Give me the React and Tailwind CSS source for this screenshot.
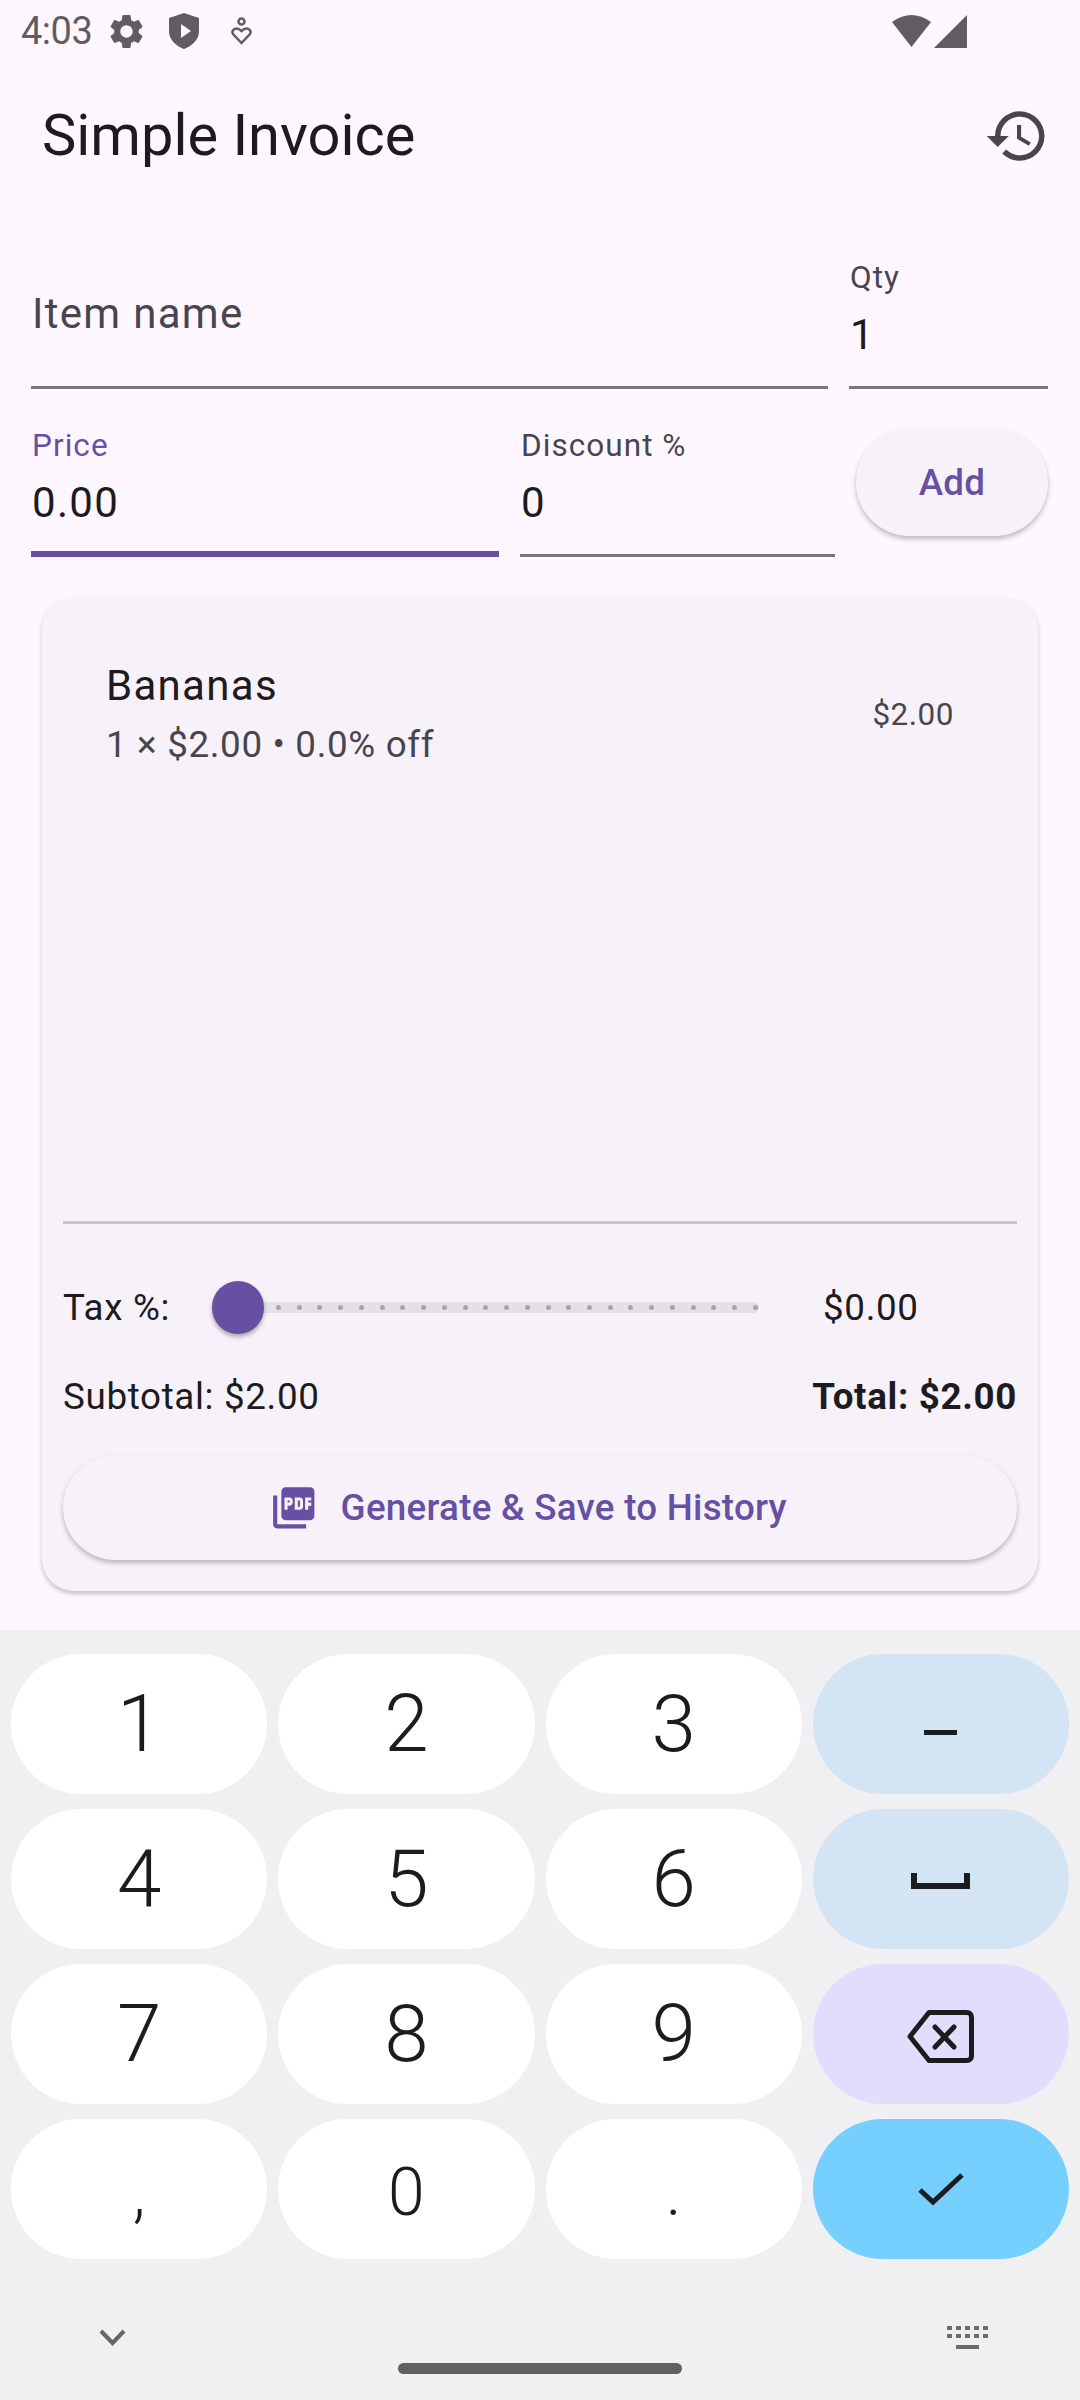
import { MdSettings, MdHistory, MdPictureAsPdf } from 'react-icons/md';

function Field({ label, value, focused, className }) {
    return (
        <div className={`h-[137px] pl-px pt-[2px] flex flex-col ${focused ? 'border-b-[6px] border-[#6750a4]' : 'border-b-[3px] border-[#79747e]'} ${className}`}>
            <div className={`text-[31.500px] leading-[48px] tracking-[1.05px] ${focused ? 'text-[#6750a4]' : 'text-[#49454f]'}`}>{label}</div>
            <div className="mt-[7px] text-[42px] leading-[52px] tracking-[1.3px] text-[#1d1b20]">{value}</div>
        </div>
    );
}

function Key({ children, className = 'bg-white' }) {
    return (
        <div className={`h-[140px] rounded-full flex items-center justify-center leading-none text-[#1b1c1e] ${className}`}>
            {children}
        </div>
    );
}

const digits = ['1', '2', '3', '4', '5', '6', '7', '8', '9'];
const dots = Array.from({ length: 24 }, (_, i) => i);

function DigitKey({ d }) {
    return <Key><span className="text-[80px] font-[350]">{d}</span></Key>;
}

function BottomKey({ d }) {
    return <Key><span className="mt-[8px] text-[66px] font-light">{d}</span></Key>;
}

export default function App() {
    return (
        <div className="w-[1080px] h-[2400px] flex flex-col bg-[#fef7ff] font-['Roboto',sans-serif] overflow-hidden">
            {/* status bar */}
            <div className="h-[57px] pt-[5px] flex items-center pl-[21px] pr-[113px] text-[#5f5d60]">
                <span className="text-[38px] leading-none tracking-[-0.5px] w-[85px]">4:03</span>
                <MdSettings className="w-[41px] h-[41px]" />
                <svg className="ml-[22px]" width="30" height="36" viewBox="0 0 30 36">
                    <path fill="currentColor" fillRule="evenodd" d="M15 0 30 5V18C30 27 23 33 15 36 7 33 0 27 0 18V5ZM12 11V25L22 18Z" />
                </svg>
                <svg className="ml-[32px]" width="21" height="28" viewBox="0 0 21 28" fill="none" stroke="currentColor" strokeWidth="2.5">
                    <circle cx="10.5" cy="4.5" r="3" />
                    <path d="M10.5 26 2 17C0 13 5 9 10.5 14 16 9 21 13 19 17Z" />
                </svg>
                <div className="flex-1" />
                <svg width="39" height="32" viewBox="0 0 39 32">
                    <path fill="currentColor" d="M0 7Q19.500-7 39 7L19.500 32Z" />
                </svg>
                <svg className="ml-[3px]" width="33" height="33" viewBox="0 0 33 33">
                    <path fill="currentColor" d="M33 0V33H0Z" />
                </svg>
            </div>

            {/* app bar */}
            <div className="h-[154px] flex items-center justify-between pl-[42px] pr-[30px]">
                <div className="text-[57.750px] leading-none pt-[4px] text-[#1d1b20]">Simple Invoice</div>
                <MdHistory className="w-[66px] h-[66px] text-[#49454f] mt-[4px]" />
            </div>

            {/* inputs */}
            <div className="mt-[41px] pl-[31px] pr-[32px] flex gap-[21px]">
                <div className="flex-1 h-[137px] pl-px pt-[32px] border-b-[3px] border-[#79747e] text-[42px] leading-[60px] tracking-[1.3px] text-[#49454f]">Item name</div>
                <Field label="Qty" value="1" className="w-[199px]" />
            </div>
            <div className="mt-[31px] pl-[31px] pr-[32px] flex items-start gap-[21px]">
                <Field label="Price" value="0.00" focused className="w-[468px]" />
                <Field label="Discount %" value="0" className="w-[315px]" />
                <div className="mt-[9px] w-[192px] h-[107px] rounded-full bg-[#f7f2fa] shadow-[0_3px_5px_rgba(0,0,0,0.25)] flex items-center justify-center text-[36.750px] font-medium tracking-[0.3px] text-[#6750a4]">Add</div>
            </div>

            {/* invoice card */}
            <div className="mt-[40px] ml-[42px] mr-[42px] h-[994px] rounded-[32px] bg-[#f7f2fa] shadow-[0_3px_4px_rgba(0,0,0,0.22)] flex flex-col">
                <div className="flex-1 pl-[64px] pr-[84px] pt-[59px] flex justify-between items-start">
                    <div>
                        <div className="text-[42px] leading-[60px] tracking-[1.3px] text-[#1d1b20]">Bananas</div>
                        <div className="text-[36.750px] leading-[58px] tracking-[0.66px] text-[#49454f]">1 × $2.00 • 0.0% off</div>
                    </div>
                    <div className="mt-[39px] text-[31.500px] leading-[40px] tracking-[0.5px] text-[#49454f]">$2.00</div>
                </div>
                <div className="mx-[21px] h-[3px] bg-[#cac4d0]" />

                <div className="mt-[56px] pl-[21px] flex items-center text-[36.750px] text-[#1d1b20]">
                    <div className="w-[149px] tracking-[0.66px]">Tax %:</div>
                    <div className="w-[547px] flex items-center">
                        <div className="w-[52px] h-[53px] rounded-full bg-[#6750a4] shadow-[0_3px_4px_rgba(0,0,0,0.3)] z-10" />
                        <div className="flex-1 h-[11px] rounded-r-full bg-[#e4e0e6] flex items-center justify-between pl-[12px] pr-[1px]">
                            {dots.map((d) => (
                                <div key={d} className="w-[5px] h-[5px] rounded-full bg-[#a8a4ab]" />
                            ))}
                        </div>
                    </div>
                    <div className="ml-[64px] tracking-[0.66px]">$0.00</div>
                </div>

                <div className="mt-[33px] mx-[21px] flex justify-between text-[36.750px] leading-[58px] tracking-[0.66px] text-[#1d1b20]">
                    <span>Subtotal: $2.00</span>
                    <span className="font-bold">Total: $2.00</span>
                </div>

                <div className="mt-[29px] mb-[31px] mx-[21px] pr-[24px] h-[105px] rounded-full bg-[#f7f2fa] shadow-[0_3px_5px_rgba(0,0,0,0.25)] flex items-center justify-center gap-[22px] text-[36.750px] font-medium text-[#6750a4]">
                    <MdPictureAsPdf className="w-[49.500px] h-[49.500px]" />
                    <span className="tracking-[0.26px]">Generate &amp; Save to History</span>
                </div>
            </div>

            {/* keyboard */}
            <div className="mt-[39px] flex-1 bg-[#f0f0f3] pt-[24px]">
                <div className="px-[11px] grid grid-cols-4 gap-x-[11px] gap-y-[15px]">
                    {digits.slice(0, 3).map((d) => <DigitKey key={d} d={d} />)}
                    <Key className="bg-[#d3e4f4]">
                        <svg className="mt-[16px]" width="33" height="5" viewBox="0 0 33 5"><rect width="33" height="5" fill="#1b1c1e" /></svg>
                    </Key>
                    {digits.slice(3, 6).map((d) => <DigitKey key={d} d={d} />)}
                    <Key className="bg-[#d3e4f4]">
                        <svg className="mt-[4px]" width="59" height="16" viewBox="0 0 59 16" fill="none" stroke="#1b1c1e" strokeWidth="5"><path d="M3 0V13H56V0" strokeWidth="6" /></svg>
                    </Key>
                    {digits.slice(6, 9).map((d) => <DigitKey key={d} d={d} />)}
                    <Key className="bg-[#e4dcfd]">
                        <svg className="mt-[5px]" width="67" height="53" viewBox="0 0 67 53" fill="none" stroke="#1b1c1e" strokeWidth="5" strokeLinejoin="round" strokeLinecap="round">
                            <path d="M22 2.500H60A4.500 4.500 0 0 1 64.500 7V46A4.500 4.500 0 0 1 60 50.500H22L3 26.500Z" />
                            <path d="M28 17 47 37M47 17 28 37" />
                        </svg>
                    </Key>
                    <BottomKey d="," />
                    <BottomKey d="0" />
                    <BottomKey d="." />
                    <Key className="bg-[#75cfff]">
                        <svg width="46" height="34" viewBox="0 0 46 34" fill="none" stroke="#1b1c1e" strokeWidth="5"><path d="M2 18 15 30 44 3" /></svg>
                    </Key>
                </div>
                <div className="mt-[67px] pl-[99px] pr-[92px] flex items-center justify-between">
                    <svg width="27" height="17" viewBox="0 0 27 17" fill="none" stroke="#666666" strokeWidth="4"><path d="M2 2 13.500 14 25 2" /></svg>
                    <svg width="41" height="23" viewBox="0 0 41 23" fill="#6b6b6b">
                        <path d="M0 0h5v4H0zM9 0h5v4H9zM18 0h5v4h-5zM27 0h5v4h-5zM36 0h5v4h-5zM0 8h5v4H0zM9 8h5v4H9zM18 8h5v4h-5zM27 8h5v4h-5zM36 8h5v4h-5zM9 19h23v4H9z" />
                    </svg>
                </div>
                <div className="mt-[14px] mx-auto w-[284px] h-[11px] rounded-full bg-[#616161]" />
            </div>
        </div>
    );
}
